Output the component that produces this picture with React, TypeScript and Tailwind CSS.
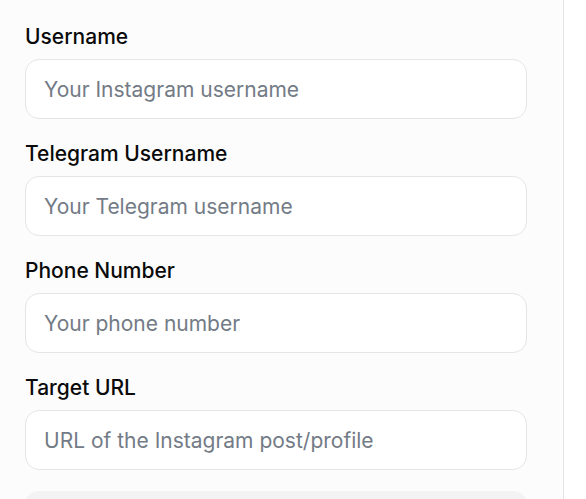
import React from "react";

const fields = [
  { label: "Username", placeholder: "Your Instagram username" },
  { label: "Telegram Username", placeholder: "Your Telegram username" },
  { label: "Phone Number", placeholder: "Your phone number" },
  { label: "Target URL", placeholder: "URL of the Instagram post/profile" },
];

export default function App() {
  return (
    <div className="flex h-[499px] w-[586px] overflow-hidden bg-white" style={{ fontFamily: "Inter, 'Noto Sans', sans-serif" }}>
      <div className="flex w-[564px] shrink-0 flex-col border-r border-[#e5e5e5] bg-[#fcfcfc] pl-[25px] pt-[23px]">
        {fields.map((f) => (
          <div key={f.label} className="mb-[21px] flex flex-col">
            <label className="mb-[8px] text-[21px] font-medium leading-[28px] text-[#0a0a0a]">{f.label}</label>
            <input
              className="h-[60px] w-[502px] rounded-[14px] border border-[#e5e5e5] bg-white px-[18px] text-[21px] text-[#111] outline-none placeholder:text-[#737b86]"
              placeholder={f.placeholder}
            />
          </div>
        ))}
        <div className="h-[60px] w-[502px] shrink-0 rounded-[14px] bg-[#f3f3f3]" />
      </div>
    </div>
  );
}
